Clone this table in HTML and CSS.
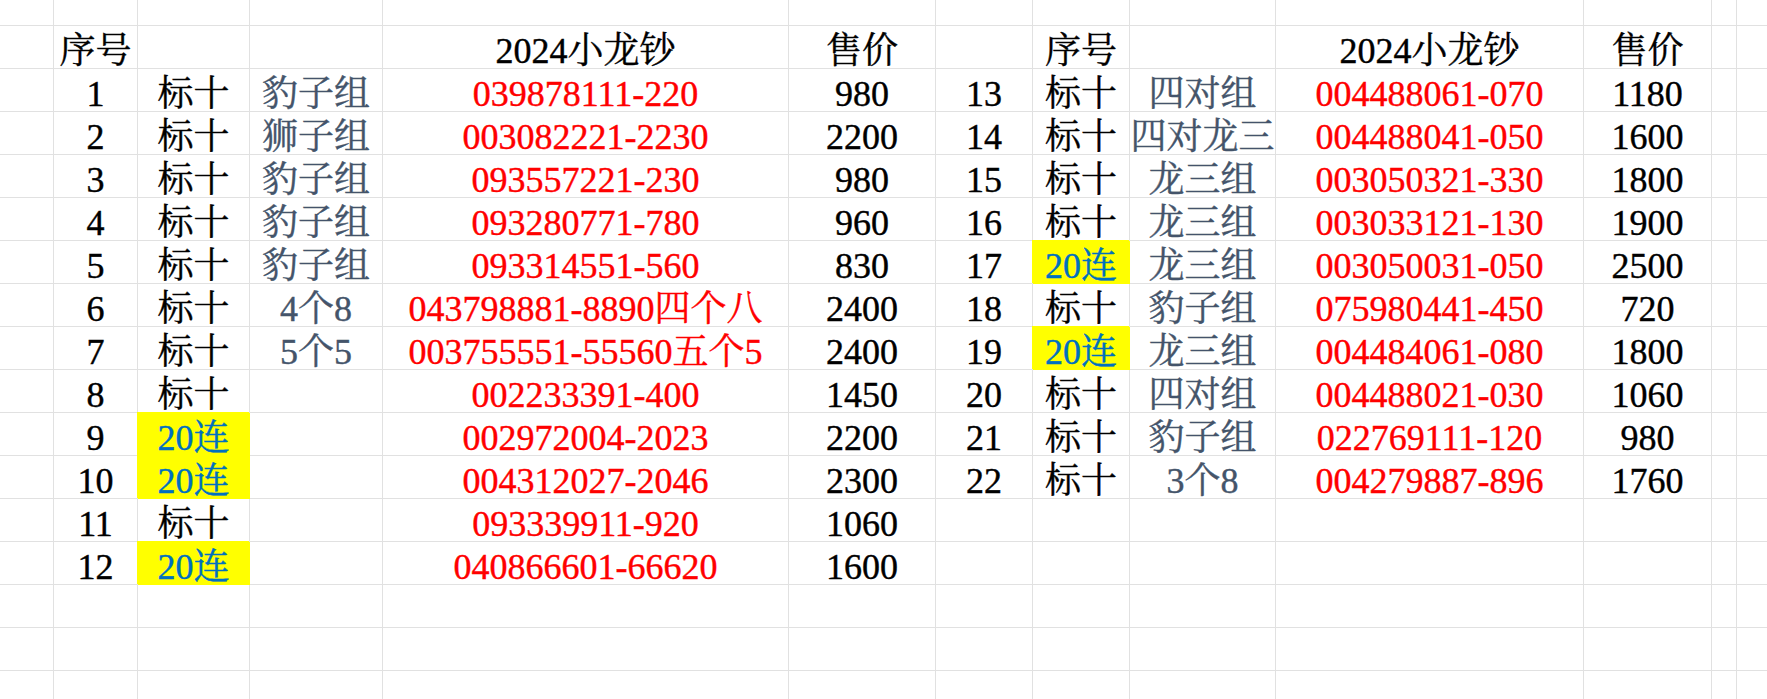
FILE: index.html
```html
<!DOCTYPE html>
<html lang="zh-CN">
<head>
<meta charset="utf-8">
<title>2024小龙钞</title>
<link rel="stylesheet" href="styles.css">
</head>
<body>
<div class="sheet">
  <div class="row top"><div class="c"></div><div class="c"></div><div class="c"></div><div class="c"></div><div class="c"></div><div class="c"></div><div class="c"></div><div class="c"></div><div class="c"></div><div class="c"></div><div class="c"></div><div class="c"></div><div class="c"></div></div>

  <div class="row"><div class="c"></div><div class="c">序号</div><div class="c"></div><div class="c"></div><div class="c">2024小龙钞</div><div class="c">售价</div><div class="c"></div><div class="c">序号</div><div class="c"></div><div class="c">2024小龙钞</div><div class="c">售价</div><div class="c"></div><div class="c"></div></div>

  <div class="row"><div class="c"></div><div class="c">1</div><div class="c">标十</div><div class="c slate">豹子组</div><div class="c red">039878111-220</div><div class="c">980</div><div class="c">13</div><div class="c">标十</div><div class="c slate">四对组</div><div class="c red">004488061-070</div><div class="c">1180</div><div class="c"></div><div class="c"></div></div>

  <div class="row"><div class="c"></div><div class="c">2</div><div class="c">标十</div><div class="c slate">狮子组</div><div class="c red">003082221-2230</div><div class="c">2200</div><div class="c">14</div><div class="c">标十</div><div class="c slate">四对龙三</div><div class="c red">004488041-050</div><div class="c">1600</div><div class="c"></div><div class="c"></div></div>

  <div class="row"><div class="c"></div><div class="c">3</div><div class="c">标十</div><div class="c slate">豹子组</div><div class="c red">093557221-230</div><div class="c">980</div><div class="c">15</div><div class="c">标十</div><div class="c slate">龙三组</div><div class="c red">003050321-330</div><div class="c">1800</div><div class="c"></div><div class="c"></div></div>

  <div class="row"><div class="c"></div><div class="c">4</div><div class="c">标十</div><div class="c slate">豹子组</div><div class="c red">093280771-780</div><div class="c">960</div><div class="c">16</div><div class="c">标十</div><div class="c slate">龙三组</div><div class="c red">003033121-130</div><div class="c">1900</div><div class="c"></div><div class="c"></div></div>

  <div class="row"><div class="c"></div><div class="c">5</div><div class="c">标十</div><div class="c slate">豹子组</div><div class="c red">093314551-560</div><div class="c">830</div><div class="c">17</div><div class="c hl">20连</div><div class="c slate">龙三组</div><div class="c red">003050031-050</div><div class="c">2500</div><div class="c"></div><div class="c"></div></div>

  <div class="row"><div class="c"></div><div class="c">6</div><div class="c">标十</div><div class="c slate">4个8</div><div class="c red">043798881-8890四个八</div><div class="c">2400</div><div class="c">18</div><div class="c">标十</div><div class="c slate">豹子组</div><div class="c red">075980441-450</div><div class="c">720</div><div class="c"></div><div class="c"></div></div>

  <div class="row"><div class="c"></div><div class="c">7</div><div class="c">标十</div><div class="c slate">5个5</div><div class="c red">003755551-55560五个5</div><div class="c">2400</div><div class="c">19</div><div class="c hl">20连</div><div class="c slate">龙三组</div><div class="c red">004484061-080</div><div class="c">1800</div><div class="c"></div><div class="c"></div></div>

  <div class="row"><div class="c"></div><div class="c">8</div><div class="c">标十</div><div class="c"></div><div class="c red">002233391-400</div><div class="c">1450</div><div class="c">20</div><div class="c">标十</div><div class="c slate">四对组</div><div class="c red">004488021-030</div><div class="c">1060</div><div class="c"></div><div class="c"></div></div>

  <div class="row"><div class="c"></div><div class="c">9</div><div class="c hl">20连</div><div class="c"></div><div class="c red">002972004-2023</div><div class="c">2200</div><div class="c">21</div><div class="c">标十</div><div class="c slate">豹子组</div><div class="c red">022769111-120</div><div class="c">980</div><div class="c"></div><div class="c"></div></div>

  <div class="row"><div class="c"></div><div class="c">10</div><div class="c hl">20连</div><div class="c"></div><div class="c red">004312027-2046</div><div class="c">2300</div><div class="c">22</div><div class="c">标十</div><div class="c slate">3个8</div><div class="c red">004279887-896</div><div class="c">1760</div><div class="c"></div><div class="c"></div></div>

  <div class="row"><div class="c"></div><div class="c">11</div><div class="c">标十</div><div class="c"></div><div class="c red">093339911-920</div><div class="c">1060</div><div class="c"></div><div class="c"></div><div class="c"></div><div class="c"></div><div class="c"></div><div class="c"></div><div class="c"></div></div>

  <div class="row"><div class="c"></div><div class="c">12</div><div class="c hl">20连</div><div class="c"></div><div class="c red">040866601-66620</div><div class="c">1600</div><div class="c"></div><div class="c"></div><div class="c"></div><div class="c"></div><div class="c"></div><div class="c"></div><div class="c"></div></div>

  <div class="row"><div class="c"></div><div class="c"></div><div class="c"></div><div class="c"></div><div class="c"></div><div class="c"></div><div class="c"></div><div class="c"></div><div class="c"></div><div class="c"></div><div class="c"></div><div class="c"></div><div class="c"></div></div>

  <div class="row"><div class="c"></div><div class="c"></div><div class="c"></div><div class="c"></div><div class="c"></div><div class="c"></div><div class="c"></div><div class="c"></div><div class="c"></div><div class="c"></div><div class="c"></div><div class="c"></div><div class="c"></div></div>

  <div class="row last"><div class="c"></div><div class="c"></div><div class="c"></div><div class="c"></div><div class="c"></div><div class="c"></div><div class="c"></div><div class="c"></div><div class="c"></div><div class="c"></div><div class="c"></div><div class="c"></div><div class="c"></div></div>
</div>
</body>
</html>
```

FILE: styles.css
```css
* {
  box-sizing: border-box;
}

html, body {
  margin: 0;
  padding: 0;
  background: #ffffff;
}

body {
  width: 1767px;
  height: 699px;
  overflow: hidden;
}

.sheet {
  display: flex;
  flex-direction: column;
  font-family: "Liberation Serif", "Noto Serif CJK SC", "Noto Sans CJK SC", serif;
  font-size: 36px;
  color: #000000;
  -webkit-text-stroke: 0.4px currentColor;
}

.row {
  display: grid;
  grid-template-columns: 54px 84px 112px 133px 406px 147px 97px 97px 146px 308px 128px 25px 1fr;
  height: 43px;
}

.row.top {
  height: 26px;
}

.row.last {
  height: 29px;
}

.c {
  display: flex;
  align-items: flex-end;
  justify-content: center;
  line-height: 34px;
  white-space: nowrap;
  border-right: 1px solid #e1e1e1;
  border-bottom: 1px solid #e1e1e1;
}

.row .c:last-child {
  border-right: none;
}

.row.last .c {
  border-bottom: none;
}

.red {
  color: #ff0000;
}

.slate {
  color: #44546a;
}

.hl {
  background: #ffff00;
  color: #0070c0;
  border-color: #ffff00;
  box-shadow: -1px -1px 0 #ffff00;
}
```
